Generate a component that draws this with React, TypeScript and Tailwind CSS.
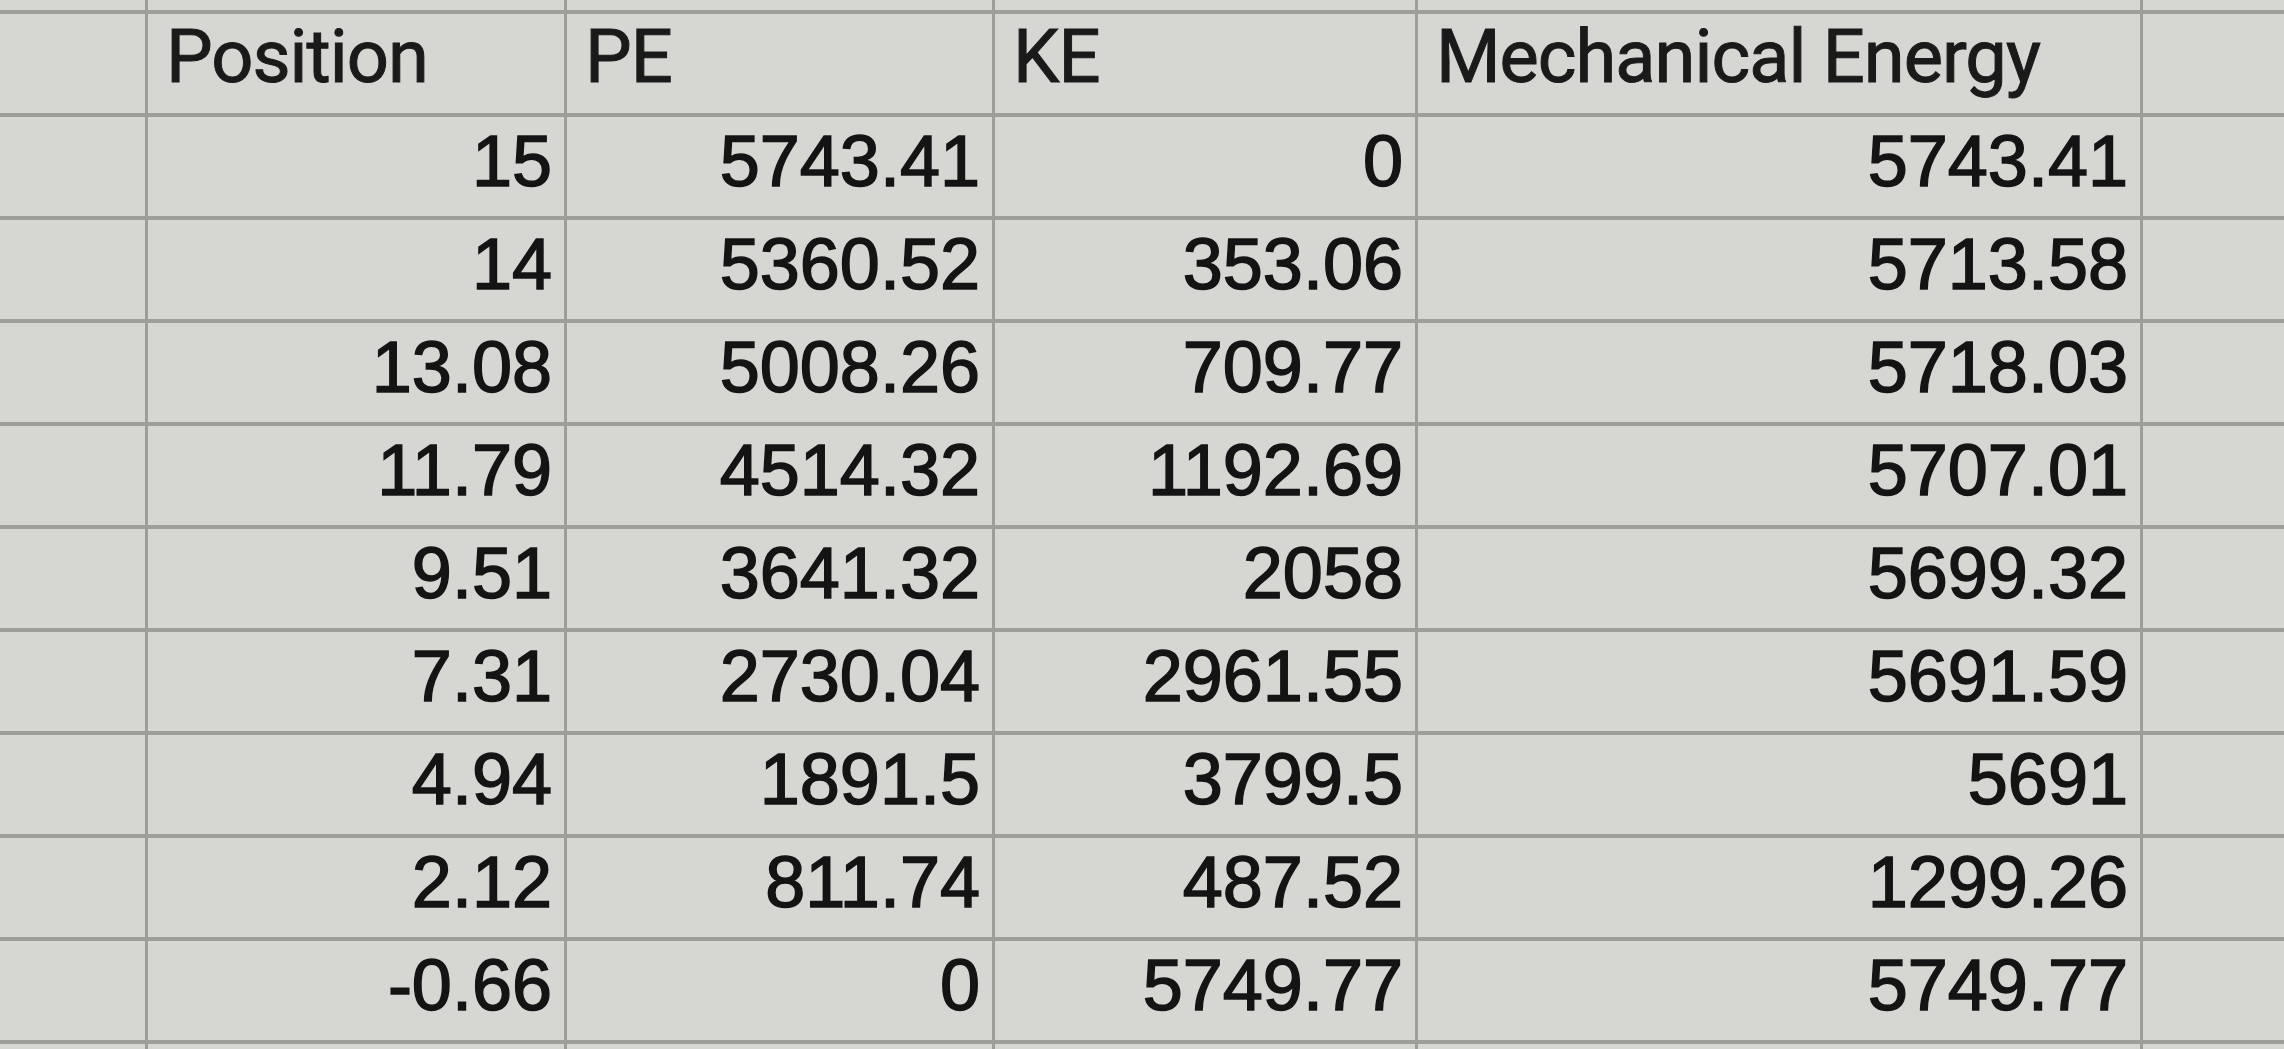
import React from "react";

const rows: string[][] = [
  ["15", "5743.41", "0", "5743.41"],
  ["14", "5360.52", "353.06", "5713.58"],
  ["13.08", "5008.26", "709.77", "5718.03"],
  ["11.79", "4514.32", "1192.69", "5707.01"],
  ["9.51", "3641.32", "2058", "5699.32"],
  ["7.31", "2730.04", "2961.55", "5691.59"],
  ["4.94", "1891.5", "3799.5", "5691"],
  ["2.12", "811.74", "487.52", "1299.26"],
  ["-0.66", "0", "5749.77", "5749.77"],
];

const headers = ["Position", "PE", "KE", "Mechanical Energy"];

function Blank() {
  return <div className="bg-[#d6d7d2]" />;
}

export default function App() {
  return (
    <div className="w-[2284px] h-[1049px] overflow-hidden bg-[#9d9d99]">
      <div className="grid grid-cols-[145px_416px_425px_420px_722px_1fr] grid-rows-[10px_99px_repeat(9,99px)_20px] gap-x-[3px] gap-y-[4px] h-full">
        {/* partial row above the header */}
        {Array.from({ length: 6 }).map((_, i) => (
          <Blank key={`t${i}`} />
        ))}

        <Blank />
        {headers.map((h) => (
          <div
            key={h}
            className="bg-[#d6d7d2] flex items-end pl-[18px] pb-[19px] text-[74px] leading-none text-[#1a1a1a] font-['Roboto',sans-serif] tracking-[-1px] [-webkit-text-stroke:1px_#1a1a1a]"
          >
            {h}
          </div>
        ))}
        <Blank />

        {rows.map((r, i) => (
          <React.Fragment key={i}>
            <Blank />
            {r.map((v, j) => (
              <div
                key={j}
                className="bg-[#d6d7d2] flex items-end justify-end pr-[12px] pb-[19px] text-[72px] leading-none text-[#141414] font-['Liberation_Sans',Arial,sans-serif] [-webkit-text-stroke:1.5px_#141414]"
              >
                {v}
              </div>
            ))}
            <Blank />
          </React.Fragment>
        ))}

        {Array.from({ length: 6 }).map((_, i) => (
          <Blank key={`b${i}`} />
        ))}
      </div>
    </div>
  );
}
